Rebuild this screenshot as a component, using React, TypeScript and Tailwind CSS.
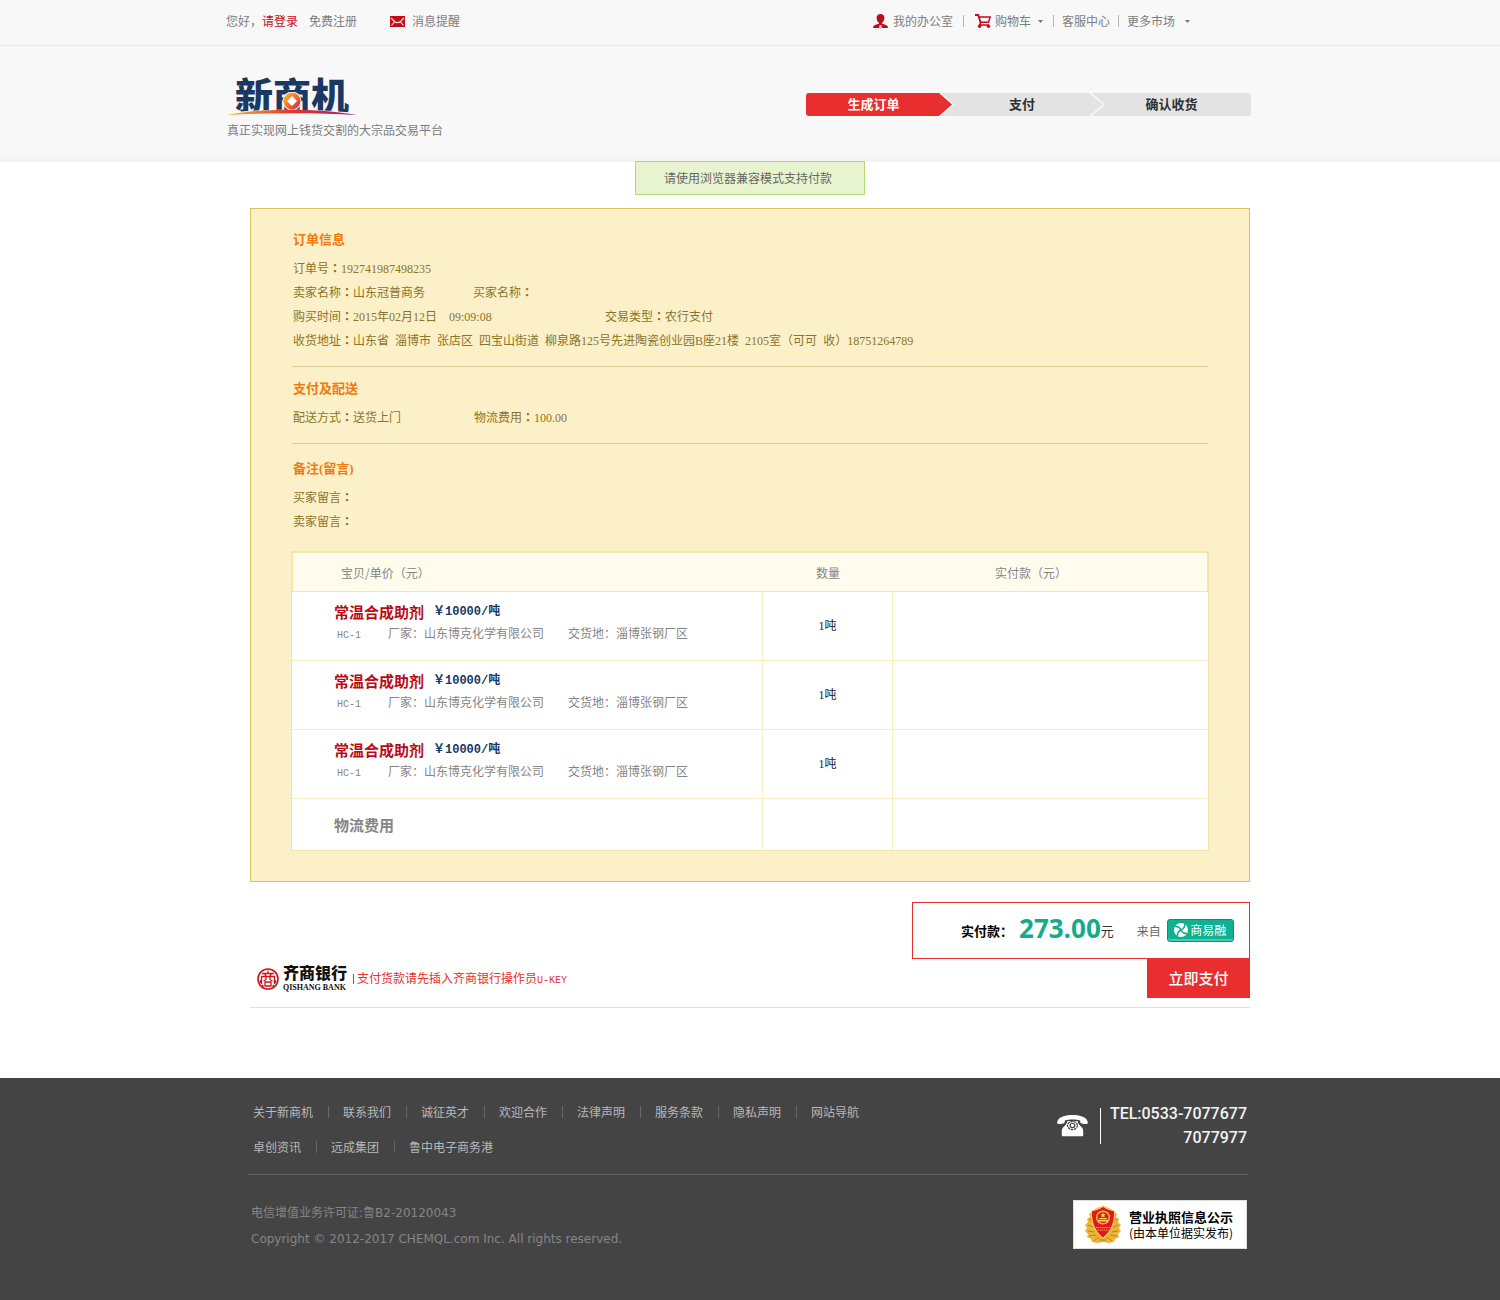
import type { ReactNode } from "react";

const Colon = () => (
  <span lang="zh-TW" className="font-bold [font-family:'Noto_Sans_CJK_TC','Noto_Sans_CJK_SC',sans-serif]">：</span>
);

const Separator = () => <span className="h-3 w-px bg-[#b5b5b5]" />;

const Caret = () => (
  <svg className="h-[3px] w-[5px]" viewBox="0 0 5 3" fill="#777" aria-hidden="true">
    <path d="M0 0h5L2.500 3z" />
  </svg>
);

const MailIcon = () => (
  <svg className="mr-[7px] h-[11px] w-[15px]" viewBox="0 0 15 11" aria-hidden="true">
    <path fill="#c00d1a" d="M0 0h15v11H0z" />
    <path d="M1 2 4.500 5.500Q7.500 8 10.500 5.500L14 2M1.500 9.500 4.500 6M13.500 9.500 10.500 6" fill="none" stroke="#fbe9ea" strokeWidth="1.100" />
  </svg>
);

const UserIcon = () => (
  <svg className="mr-[5px] h-[15px] w-[15px]" viewBox="0 0 15 15" aria-hidden="true">
    <path
      fill="#c00d1a"
      d="M7.500 0C5.200 0 3.600 1.600 3.600 4c0 2 .9 3.800 2.200 4.600v1.200C4 10.400.8 10.900.3 12.600L0 14h15l-.3-1.400c-.5-1.700-3.700-2.200-5.500-2.800V8.600c1.300-.8 2.200-2.600 2.200-4.600C11.400 1.600 9.800 0 7.500 0z"
    />
    <path fill="#f7b9bd" d="M6.500 11h2l.6 3.600h-3.200z" />
  </svg>
);

const CartIcon = () => (
  <svg className="mr-1 h-[14px] w-4" viewBox="0 0 16 14" fill="none" stroke="#c00d1a" aria-hidden="true">
    <path d="M0 1h3.200L5.800 9.200" strokeWidth="1.800" />
    <path d="M4 2.900h11.200l-1.700 5.300H5.600M6 8.200 4.600 11h9.400" strokeWidth="1.500" />
    <circle cx="4.600" cy="12.200" r="1.700" fill="#c00d1a" stroke="none" />
    <circle cx="13.500" cy="12.200" r="1.700" fill="#c00d1a" stroke="none" />
  </svg>
);

function TopBar() {
  return (
    <div className="border-b border-[#ebebeb]">
      <div className="mx-auto flex h-[45px] w-full max-w-[1048px] items-center justify-between pr-[84px] pb-[3px] text-xs text-[#7d7d7d]">
        <div className="flex items-center">
          <span>您好，</span>
          <a href="#login" className="text-[#c00d1a]">请登录</a>
          <a href="#register" className="ml-[11px]">免费注册</a>
          <a href="#messages" className="ml-[33px] flex items-center">
            <MailIcon />
            消息提醒
          </a>
        </div>
        <nav className="flex items-center">
          <a href="#office" className="mr-2.5 flex items-center">
            <UserIcon />
            我的办公室
          </a>
          <Separator />
          <button type="button" className="mr-2.5 ml-[11px] flex items-center">
            <CartIcon />
            <span className="mr-[7px]">购物车</span>
            <Caret />
          </button>
          <Separator />
          <a href="#service" className="mx-2">客服中心</a>
          <Separator />
          <button type="button" className="ml-2 flex items-center gap-2.5">
            更多市场
            <Caret />
          </button>
        </nav>
      </div>
    </div>
  );
}

function Logo() {
  return (
    <div className="pt-[31px] pl-px">
      <div className="relative h-[39px] w-[130px]">
        <h1 className="text-center text-[38px] leading-[34px] font-black whitespace-nowrap text-[#1b3763]">新商机</h1>
        <svg className="absolute inset-x-0 bottom-0 h-[24px] w-[130px]" viewBox="0 0 130 24" aria-hidden="true">
          <defs>
            <linearGradient id="arc" x1="0" x2="1" y1="0" y2="0">
              <stop offset="0" stopColor="#f5b62c" />
              <stop offset=".5" stopColor="#e5332a" />
              <stop offset="1" stopColor="#a5187c" />
            </linearGradient>
            <linearGradient id="coin" x1="0" x2="1" y1="0" y2="1">
              <stop offset="0" stopColor="#fbc43a" />
              <stop offset=".55" stopColor="#ee6a2a" />
              <stop offset="1" stopColor="#c01c6c" />
            </linearGradient>
          </defs>
          <path d="M0 21C30 16.500 90 16.500 130 21V24H0z" fill="#f8f8f8" />
          <circle cx="65" cy="9" r="9.500" fill="#f8f8f8" />
          <circle cx="65" cy="9" r="8.500" fill="url(#coin)" />
          <path d="m65 4 5 5-5 5-5-5z" fill="#fff" />
          <path d="M0 23C35 16 90 16 130 23 90 20.500 40 20.500 0 23z" fill="url(#arc)" />
        </svg>
      </div>
      <p className="mt-1 text-xs leading-5 text-[#7d7d7d]">真正实现网上钱货交割的大宗品交易平台</p>
    </div>
  );
}

function Steps() {
  return (
    <ol className="mt-[47px] mr-[23px] flex h-[23px] text-[13px] leading-[22px] font-bold text-[#2f2f2f]">
      <li className="w-[146px] rounded-l-[3px] bg-[#e82e2e] pr-[11px] text-center text-white [clip-path:polygon(0_0,calc(100%-13px)_0,100%_50%,calc(100%-13px)_100%,0_100%)]">
        生成订单
      </li>
      <li className="-ml-[11px] w-[162px] bg-[#e3e3e3] text-center [clip-path:polygon(0_0,calc(100%-14px)_0,100%_50%,calc(100%-14px)_100%,0_100%,13px_50%)]">
        支付
      </li>
      <li className="-ml-[11px] w-[159px] rounded-r-[3px] bg-[#e3e3e3] text-center [clip-path:polygon(0_0,100%_0,100%_100%,0_100%,13px_50%)]">
        确认收货
      </li>
    </ol>
  );
}

function Section({ title, className, children }: { title: string; className: string; children: ReactNode }) {
  return (
    <section className={className}>
      <h2 className="mb-1 h-6 text-[13px] leading-6 font-bold text-[#f27a0c]">{title}</h2>
      {children}
    </section>
  );
}

const products = [1, 2, 3];
const cell = "border-r border-b border-[#fbefc2]";

function ProductTable() {
  return (
    <table className="mt-[18px] w-full table-fixed border-separate border-spacing-0 border border-[#f6e5a8] bg-white text-xs">
      <colgroup>
        <col className="w-[471px]" />
        <col className="w-[130px]" />
        <col />
      </colgroup>
      <thead className="text-[#858585]">
        <tr className="h-10 bg-[#fffcee]">
          <th scope="col" className="border-t border-b border-l border-[#f6e5a8] pt-0.5 pl-12 text-left font-normal">宝贝/单价（元）</th>
          <th scope="col" className="border-t border-b border-[#f6e5a8] pt-0.5 font-normal">数量</th>
          <th scope="col" className="border-t border-r border-b border-[#f6e5a8] pt-0.5 pl-[102px] text-left font-normal">实付款（元）</th>
        </tr>
      </thead>
      <tbody>
        {products.map((id) => (
          <tr key={id} className="h-[69px]">
            <td className={`${cell} pb-2 pl-[42px]`}>
              <div className="flex items-center gap-[9px] leading-[22px] font-bold">
                <span className="text-[15px] text-[#bb0a14]">常温合成助剂</span>
                <span className="text-[#1b3763] [font-family:'Liberation_Mono','Noto_Sans_CJK_SC',monospace]">￥10000/吨</span>
              </div>
              <div className="flex h-5 items-baseline pl-[3px] leading-5 text-[#858585]">
                <span className="w-[51px] text-[10px] [font-family:'Liberation_Mono',monospace]">HC-1</span>
                <span className="mr-6">厂家：山东博克化学有限公司</span>
                <span>交货地：淄博张钢厂区</span>
              </div>
            </td>
            <td className={`${cell} text-center text-[#222] [font-family:'Liberation_Serif','Noto_Sans_CJK_SC',serif]`}>1吨</td>
            <td className="border-b border-[#fbefc2]" />
          </tr>
        ))}
        <tr className="h-[51px]">
          <td className="border-r border-[#fbefc2] pl-[42px] text-[15px] font-bold text-[#858585]">物流费用</td>
          <td className="border-r border-[#fbefc2]" />
          <td />
        </tr>
      </tbody>
    </table>
  );
}

function OrderPanel() {
  return (
    <div className="mt-[13px] border border-[#dcc25e] bg-[#fcf0c8] px-10 pb-[30px] text-xs leading-6 text-[#8c7427] [font-family:'Liberation_Serif','Noto_Sans_CJK_SC',serif]">
      <Section title="订单信息" className="mx-px border-b border-[#dccf98] px-px pt-[19px] pb-3.5">
        <p className="h-6">订单号<Colon />192741987498235</p>
        <p className="flex h-6 items-baseline gap-12">
          <span>卖家名称<Colon />山东冠普商务</span>
          <span>买家名称<Colon /></span>
        </p>
        <p className="flex h-6 items-baseline">
          <span className="w-[156px]">购买时间<Colon />2015年02月12日</span>
          <span className="w-[156px]">09:09:08</span>
          <span>交易类型<Colon />农行支付</span>
        </p>
        <p className="flex h-6 items-baseline gap-x-1.5 whitespace-nowrap">
          <span>收货地址<Colon />山东省</span>
          <span>淄博市</span>
          <span>张店区</span>
          <span>四宝山街道</span>
          <span>柳泉路125号先进陶瓷创业园B座21楼</span>
          <span>2105室（可可</span>
          <span>收）18751264789</span>
        </p>
      </Section>
      <Section title="支付及配送" className="mx-px border-b border-[#dccf98] px-px pt-2.5 pb-3.5">
        <p className="flex h-6 items-baseline">
          <span className="w-[181px]">配送方式<Colon />送货上门</span>
          <span>物流费用<Colon />100.00</span>
        </p>
      </Section>
      <Section title="备注(留言)" className="px-0.5 pt-[13px]">
        <p className="h-6">买家留言<Colon /></p>
        <p className="h-6">卖家留言<Colon /></p>
      </Section>
      <div className="[font-family:'Noto_Sans_CJK_SC',sans-serif]">
        <ProductTable />
      </div>
    </div>
  );
}

const BankLogo = () => (
  <svg className="h-[22px] w-[22px]" viewBox="0 0 22 22" fill="none" stroke="#c8141e" aria-hidden="true">
    <circle cx="11" cy="11" r="10" strokeWidth="1.600" />
    <path
      strokeWidth="1.300"
      d="M11 2.500v2.500M5 5.500h12M8 6l1 2.500M14 6l-1 2.500M4.500 16V8.500h13V16M9 9v2.500L6.500 13M13 9v2.500l2.500 1.500M8 14h6v4H8zM4 12l-1 3M18 12l1 3M6.500 18.500 5 17M15.500 18.500 17 17"
    />
  </svg>
);

const PinwheelIcon = () => (
  <svg className="h-[14px] w-[14px]" viewBox="0 0 14 14" aria-hidden="true">
    <circle cx="7" cy="7" r="7" fill="#fff" />
    <path
      fill="none"
      stroke="#0fa98c"
      strokeWidth="1.500"
      d="M7 7C5.500 4 3.500 3 1 3.500M7 7c3-1.500 4-3.500 3.500-6M7 7c1.500 3 3.500 4 6 3.500M7 7c-3 1.500-4 3.500-3.500 6"
    />
  </svg>
);

function Payment() {
  return (
    <section className="mt-5 border-b border-[#e0e0e0] pb-[9px]">
      <div className="ml-auto flex h-[57px] w-[338px] items-center border border-[#e82e2e] pl-12 text-xs">
        <span className="text-[13px] font-bold text-black">实付款：</span>
        <strong className="ml-1.5 pb-1.5 text-[26px] leading-8 text-[#13ab8c] [font-family:'Open_Sans',sans-serif]">273.00</strong>
        <span className="text-[13px] text-[#333]">元</span>
        <span className="mr-1.5 ml-[23px] text-[#666]">来自</span>
        <a href="#rong" className="flex h-[23px] w-[67px] items-center justify-center gap-0.5 rounded-[3px] border border-[#0a8f75] bg-[#0fb193] pb-0.5 text-white shadow-[inset_0_-2px_0_#4cc9b0]">
          <PinwheelIcon />
          商易融
        </a>
      </div>
      <div className="flex items-center justify-between pl-[7px]">
        <div className="flex items-center text-xs text-[#e82e2e]">
          <BankLogo />
          <div className="mr-[5px] ml-1 w-[65px] pb-0.5 text-[#111]">
            <div className="text-base leading-4 font-black">齐商银行</div>
            <div className="mt-1 text-[8px] leading-2 font-bold whitespace-nowrap [font-family:'Liberation_Serif',serif]">QISHANG BANK</div>
          </div>
          <span className="mr-[3px] h-2.5 w-px bg-[#e82e2e]" />
          <p className="flex items-baseline">
            支付货款请先插入齐商银行操作员
            <span className="text-[10px] [font-family:'Liberation_Mono',monospace]">U-KEY</span>
          </p>
        </div>
        <button type="button" className="h-[39px] w-[103px] bg-[#e82e2e] text-[15px] font-medium text-white">
          立即支付
        </button>
      </div>
    </section>
  );
}

const linkRows = [
  ["关于新商机", "联系我们", "诚征英才", "欢迎合作", "法律声明", "服务条款", "隐私声明", "网站导航"],
  ["卓创资讯", "远成集团", "鲁中电子商务港"],
];

const PhoneIcon = () => (
  <svg className="h-[22px] w-[31px]" viewBox="0 0 31 22" aria-hidden="true">
    <path
      fill="#fff"
      d="M15.500 0C9 0 3 1.500 1 5 0 7-.1 8.500.8 8.800c1.500.5 4.500.2 6.200-.6.9-.5.700-1.500.9-2.600C10 4.700 13 4.600 15.500 4.600s5.500.1 7.600 1c.2 1.100 0 2.100.9 2.600 1.700.8 4.700 1.100 6.200.6.9-.3.800-1.800-.2-3.800-2-3.500-8-5-14.500-5z"
    />
    <path fill="#fff" d="M10.500 6h10c.5 2.500 2 4.300 4 6 1.300 1.200 1.700 2.500 1.700 4.500V20c0 .9-.5 1.300-1.200 1.300H6c-.7 0-1.200-.4-1.200-1.300v-3.500c0-2 .4-3.300 1.700-4.500 2-1.700 3.500-3.500 4-6z" />
    <ellipse cx="15.500" cy="10.500" rx="5" ry="4" fill="none" stroke="#444" strokeWidth="1.300" strokeDasharray="2.400 .7" />
    <ellipse cx="15.500" cy="10.500" rx="2.400" ry="2" fill="none" stroke="#444" strokeWidth="1.200" />
  </svg>
);

const Emblem = () => (
  <svg className="h-[39px] w-[36px]" viewBox="0 0 36 39" aria-hidden="true">
    <path
      fill="#e9b53a"
      d="M18 .5 28 5l4 4-1 3 3 2-1 3 3 3-2 3 2 3-3 3 1 3-4 2-1 3-5 1-6-1-6 1-5-1-1-3-4-2 1-3-3-3 2-3-2-3 3-3-1-3 3-2-1-3 4-4z"
    />
    <path fill="none" stroke="#b97c1b" strokeWidth=".9" d="M3 20l5 2M3 26l6 1M4 31l7-1M9 36l5-4M33 20l-5 2M33 26l-6 1M32 31l-7-1M27 36l-5-4M4 14l4 2M32 14l-4 2M14 35h8" />
    <path fill="#e01b1b" stroke="#f7d774" strokeWidth="1" d="M18 1.500c3 2 7 3.500 11.500 4.500C30 16 27 26 18 33 9 26 6 16 6.500 6 11 5 15 3.500 18 1.500z" />
    <circle cx="18" cy="12.500" r="7" fill="#f0c14a" />
    <circle cx="18" cy="12.500" r="5.600" fill="#e01b1b" />
    <path fill="#f8d45a" d="m18 7.500.8 1.700 1.800.2-1.300 1.200.3 1.800-1.600-.9-1.600.9.3-1.800-1.300-1.200 1.800-.2zM14 13h8v1.200h-8zM13 15h10v1.500H13z" />
    <path stroke="#f2b04a" strokeWidth="1" strokeDasharray="1.500 .6" fill="none" d="M11 22.500h14M12.500 25h11" />
  </svg>
);

function Footer() {
  return (
    <footer className="mt-[70px] bg-[#444] pb-[51px] text-xs text-[#b8b8b8]">
      <div className="mx-auto w-full max-w-[1004px] pr-1">
        <div className="flex items-start justify-between border-b border-[#666] pt-4 pr-px pb-2.5 pl-[5px]">
          <div>
            {linkRows.map((row) => (
              <ul key={row[0]} className="flex h-[35px] items-center">
                {row.map((label, i) => (
                  <li key={label} className="flex items-center">
                    {i > 0 && <span className="mr-3.5 ml-[15px] h-3 w-px bg-[#666]" />}
                    <a href="#info">{label}</a>
                  </li>
                ))}
              </ul>
            ))}
          </div>
          <div className="mt-2 flex items-center">
            <PhoneIcon />
            <span className="mr-[9px] ml-3 h-9 w-px bg-white" />
            <p className="text-right text-base leading-6 font-medium text-[#f2f2f2] [font-family:Roboto,sans-serif]">
              TEL:0533-7077677
              <br />
              7077977
            </p>
          </div>
        </div>
        <div className="flex items-start justify-between pt-[25px] pr-px pl-[3px]">
          <div className="text-xs leading-[26px] text-[#858585] [font-family:'DejaVu_Sans','Noto_Sans_CJK_SC',sans-serif]">
            <p>电信增值业务许可证:鲁B2-20120043</p>
            <p>Copyright © 2012-2017 CHEMQL.com Inc. All rights reserved.</p>
          </div>
          <a href="#license" className="flex h-[49px] w-[174px] items-center gap-2 border border-[#ddd] bg-white pl-[11px] leading-4 text-black">
            <Emblem />
            <span className="whitespace-nowrap">
              <b className="block text-[13px]">营业执照信息公示</b>
              (由本单位据实发布)
            </span>
          </a>
        </div>
      </div>
    </footer>
  );
}

export default function App() {
  return (
    <div className="bg-white [font-family:'Noto_Sans_CJK_SC',sans-serif]" lang="zh-CN">
      <header className="h-[162px] bg-linear-to-b from-[#f8f8f8] from-95% to-[#f2f2f2]">
        <TopBar />
        <div className="mx-auto flex w-full max-w-[1048px] justify-between">
          <Logo />
          <Steps />
        </div>
      </header>
      <main className="mx-auto w-full max-w-[1000px]">
        <p role="status" className="relative mx-auto -mt-px h-[34px] w-[230px] border border-[#b5da74] bg-[#e8f4cf] pr-1 text-center text-xs leading-8 text-[#666]">
          请使用浏览器兼容模式支持付款
        </p>
        <OrderPanel />
        <Payment />
      </main>
      <Footer />
    </div>
  );
}
